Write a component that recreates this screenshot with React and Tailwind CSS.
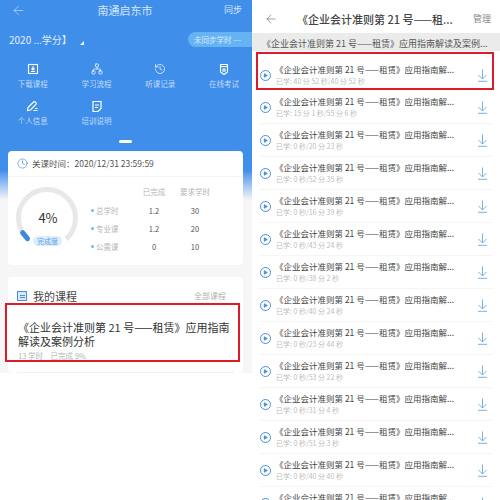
import { ArrowLeft, Clock, Play, Network, History } from 'lucide-react';

const COURSE = '《企业会计准则第 21 号——租赁》应用指南解...';
const FONT = 'font-["Noto_Sans_CJK_SC","Liberation_Sans",sans-serif]';

const LESSONS = [
  '40 分 52 秒/40 分 52 秒',
  '15 分 1 秒/55 分 6 秒',
  '0 秒/20 分 23 秒',
  '0 秒/52 分 35 秒',
  '0 秒/16 分 39 秒',
  '0 秒/43 分 24 秒',
  '0 秒/38 分 2 秒',
  '0 秒/40 分 24 秒',
  '0 秒/23 分 44 秒',
  '0 秒/53 分 22 秒',
  '0 秒/31 分 4 秒',
  '0 秒/51 分 3 秒',
  '0 秒/40 分 40 秒',
  '0 秒/40 分 40 秒',
];

const STATS = [
  ['总学时', '1.2', '30'],
  ['专业课', '1.2', '20'],
  ['公需课', '0', '10'],
];

// icons the packages don't have in this shape
const DownloadBox = () => (
  <svg width="12" height="12" viewBox="0 0 12 12" fill="none" stroke="white" strokeWidth="1.1">
    <rect x="1.5" y="1.5" width="9" height="9" />
    <path d="M6 3v4M4.5 5.5 6 7l1.5-1.5M4 8.5h4" />
  </svg>
);

const Badge = () => (
  <svg width="12" height="13" viewBox="0 0 12 13" fill="none" stroke="white" strokeWidth="1.1">
    <path d="M2.5 1.5h7v7.5L6 11.5 2.5 9z" />
    <path d="M2.5 3.5h7" />
    <circle cx="6" cy="7" r="1.3" />
  </svg>
);

const PenLine = () => (
  <svg width="13" height="12" viewBox="0 0 13 12" fill="none" stroke="white" strokeWidth="1.2">
    <path d="M1.5 10.5 2 7.5 7.5 2a1.2 1.2 0 0 1 1.8 0l.6.6a1.2 1.2 0 0 1 0 1.8L4.5 10z" />
    <path d="M7.5 10.5h4M9 8.5h2.5" />
  </svg>
);

const DocLines = () => (
  <svg width="12" height="13" viewBox="0 0 12 13" fill="none" stroke="white" strokeWidth="1.2">
    <path d="M2 1.5h8v7l-3 3H2z" />
    <path d="M4 5h4M4 7.5h3" />
  </svg>
);

const DownArrow = () => (
  <svg width="11" height="13" viewBox="0 0 11 13" fill="none" stroke="#6aa6e0" strokeWidth="0.9">
    <path d="M5.5 0.5v9.5M1.5 6 5.5 10 9.5 6M1 12.3h9" />
  </svg>
);

const PlayDot = () => (
  <span className="w-[11px] h-[11px] rounded-full border border-[#4a90d9] flex items-center justify-center shrink-0">
    <Play size={5} fill="#4a90d9" color="#4a90d9" />
  </span>
);

const Menu = ({ icon, label }) => (
  <div className="flex flex-col items-center h-[37px] gap-[2px]">
    <div className="h-[14px] flex items-center justify-center">{icon}</div>
    <span className="text-[7.5px] leading-[11px] text-[#c2dafa] whitespace-nowrap">{label}</span>
  </div>
);

const Gauge = () => (
  <svg width="66" height="66" viewBox="0 0 66 66" fill="none" className="absolute left-[6px] top-[8px]">
    <path d="M14.5 54.7 A28.5 28.5 0 1 1 52.2 54.1" stroke="#e8e8e8" strokeWidth="5" />
    <path d="M8.6 47.7 L13.5 53.7" stroke="#3f87d8" strokeWidth="5" strokeLinecap="round" />
  </svg>
);

const LeftPhone = () => (
  <div className="w-[252px] h-[373px] shrink-0 overflow-hidden bg-gradient-to-b from-[#3f8eea] from-[170px] to-[#f6f6f6] to-[200px]">
    <div className="h-[20px] flex items-center justify-between pl-[11px] pr-[10px] text-[#d5e6fb]">
      <ArrowLeft size={15} strokeWidth={1} color="#d5e6fb" />
      <span className="text-[11px]">南通启东市</span>
      <span className="text-[9px]">同步</span>
    </div>
    <div className="mt-[12px] flex items-center justify-between h-[15px]">
      <div className="flex items-center pl-[9px] text-[#e3eefc] text-[10px]">
        <span>2020 ...学分】</span>
        <span className="ml-[8px] mt-[6px] w-0 h-0 border-l-[4px] border-l-transparent border-b-[4px] border-b-white" />
      </div>
      <div className="w-[64px] h-[15px] rounded-l-full bg-[#66b3f4] pl-[6px] text-[7.5px] leading-[15px] text-[#d7ebfc] whitespace-nowrap">
        未同步学时 ---
      </div>
    </div>
    <div className="mt-[15px] ml-[1px] grid grid-cols-[repeat(4,63.7px)]">
      <Menu icon={<DownloadBox />} label="下载课程" />
      <Menu icon={<Network size={12} color="white" strokeWidth={1.4} />} label="学习流程" />
      <Menu icon={<History size={12} color="white" strokeWidth={1.4} />} label="听课记录" />
      <Menu icon={<Badge />} label="在线考试" />
      <Menu icon={<PenLine />} label="个人信息" />
      <Menu icon={<DocLines />} label="培训说明" />
    </div>
    <div className="mt-[4px] ml-[119px] w-[13px] h-[3px] rounded-full bg-white" />

    <div className="mt-[8px] mx-[8px] w-[235px] h-[114px] rounded-[4px] bg-white">
      <div className="h-[26px] flex items-center pl-[9px] gap-[4px] border-b border-[#f3f3f3] text-[8.5px] text-[#555]">
        <Clock size={11} color="#4a90d9" strokeWidth={1.5} />
        <span>关课时间：2020/12/31 23:59:59</span>
      </div>
      <div className="flex">
        <div className="relative w-[82px] h-[88px] shrink-0">
          <Gauge />
          <span className="absolute left-0 w-[80px] top-[33px] text-center text-[13px] leading-[16px] text-[#333]">4%</span>
          <span className="absolute left-[25px] top-[59px] w-[29px] h-[10px] rounded-full bg-[#dcedfb] text-center text-[7px] leading-[10px] text-[#5fa3e3]">完成度</span>
        </div>
        <div className="flex-1 text-[7.5px]">
          <div className="h-[18px] mt-[6px] flex items-center text-[#b5b5b5]">
            <span className="w-[44px]" />
            <span className="w-[40px] text-center">已完成</span>
            <span className="w-[42px] text-center">要求学时</span>
          </div>
          {STATS.map(([name, done, total]) => (
            <div key={name} className="h-[18.3px] flex items-center text-[#555]">
              <span className="w-[44px] flex items-center gap-[2px] text-[#b5b5b5]">
                <i className="ml-[1px] w-[3px] h-[3px] rounded-full bg-[#7fb5e8]" />
                {name}
              </span>
              <span className="w-[40px] text-center">{done}</span>
              <span className="w-[42px] text-center">{total}</span>
            </div>
          ))}
        </div>
      </div>
    </div>

    <div className="relative mt-[12px] mx-[8px] w-[235px] h-[96px] rounded-[4px] bg-white">
      <div className="h-[26px] flex items-center justify-between pl-[9px] pr-[17px] pt-[12px]">
        <div className="flex items-center gap-[6px] text-[11px] leading-[14px] text-[#444]">
          <span className="w-[10px] h-[10px] border border-[#4a90d9] bg-[#d7e8f9] flex items-center justify-center">
            <i className="w-[5px] h-[3px] border-y border-[#4a90d9]" />
          </span>
          我的课程
        </div>
        <span className="text-[8px] leading-[14px] text-[#b0b0b0]">全部课程</span>
      </div>
      <div className="absolute -left-[3px] top-[26px] w-[235px] h-[59px] overflow-hidden border-2 border-[#dd1c2a] bg-white pl-[11px] pt-[15px] text-[#333]">
        <p className="text-[11px] leading-[14px] whitespace-nowrap">《企业会计准则第 21 号——租赁》应用指南<br />解读及案例分析</p>
        <p className="mt-[3px] text-[7.5px] leading-[9px] text-[#b5b5b5]">13 学时　已完成 9%</p>
      </div>
      <div className="absolute left-[9px] top-[95px] w-[217px] h-[1px] bg-[#f0f0f0]" />
    </div>
  </div>
);

const LessonText = ({ time }) => (
  <div className="ml-[4px] flex-1 min-w-0">
    <div className="text-[8.5px] leading-[11px] text-[#444] whitespace-nowrap">{COURSE}</div>
    <div className="ml-[1px] mt-[2px] text-[7px] leading-[9px] text-[#bdbdbd] whitespace-nowrap">已学: {time}</div>
  </div>
);

const RightPhone = () => (
  <div className="w-[248px] h-[500px] shrink-0 overflow-hidden bg-white">
    <div className="h-[33px] flex items-center pl-[12px] pr-[9px] pt-[5px]">
      <ArrowLeft size={14} strokeWidth={1} color="#666" />
      <span className="ml-[19px] flex-1 text-[11px] font-medium text-[#444] whitespace-nowrap">《企业会计准则第 21 号——租...</span>
      <span className="text-[9px] text-[#888]">管理</span>
    </div>
    <div className="h-[18px] bg-[#ebebeb] pl-[10px] pt-[3px] text-[9px] leading-[15px] text-[#555] whitespace-nowrap">
      《企业会计准则第 21 号——租赁》应用指南解读及案例...
    </div>
    <div className="mt-[1px] ml-[4px] w-[238px] h-[38px] border-2 border-[#dd1c2a] pl-[2px] pr-[2px] pt-[8px] flex items-center">
      <PlayDot />
      <LessonText time={LESSONS[0]} />
      <span className="mr-[2px]"><DownArrow /></span>
    </div>
    <div className="mt-[1px] ml-[8px] mr-[8px]">
      {LESSONS.slice(1).map((time, i) => (
        <div key={i} className="h-[33px] flex items-center pr-[4px] border-b border-[#f5f5f5]">
          <PlayDot />
          <LessonText time={time} />
          <DownArrow />
        </div>
      ))}
    </div>
  </div>
);

export default function App() {
  return (
    <div className={`w-[500px] h-[500px] overflow-hidden flex bg-white ${FONT}`}>
      <LeftPhone />
      <RightPhone />
    </div>
  );
}
